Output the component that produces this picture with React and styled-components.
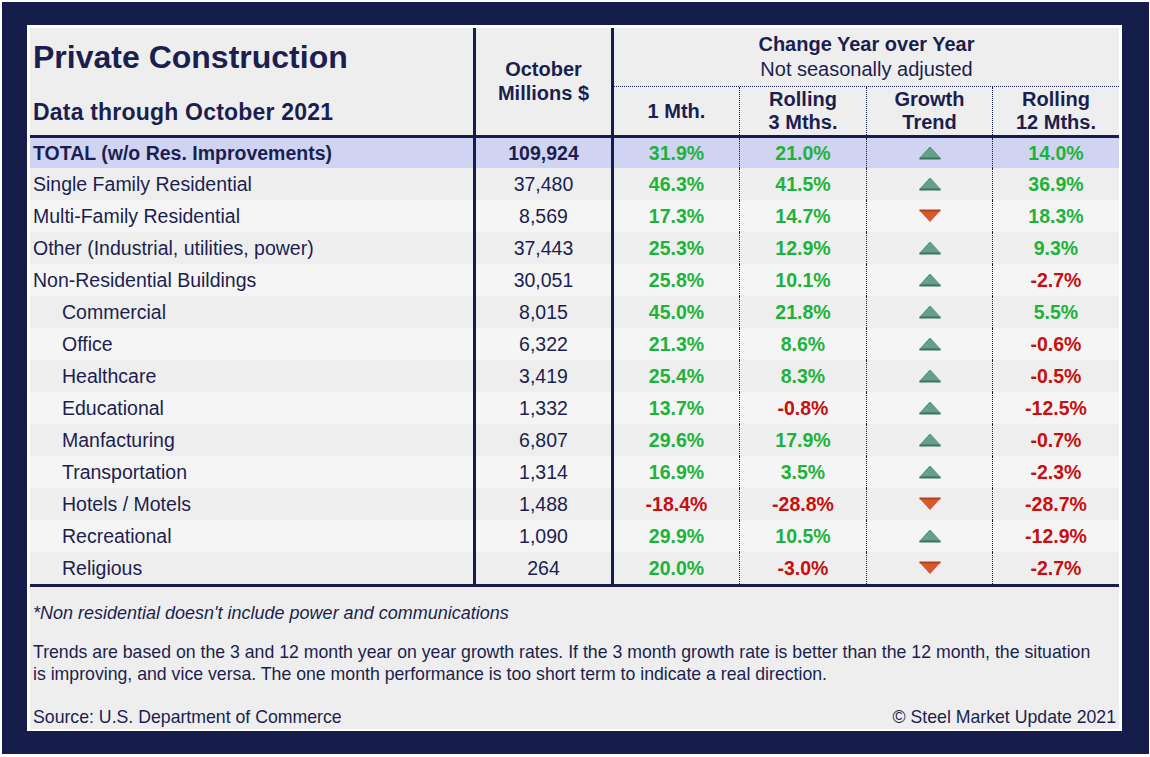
import React from 'react';
import styled, { createGlobalStyle } from 'styled-components';

const NAVY = '#171d4b';
const INK = '#1b1f4f';
const GREEN = '#1db33b';
const RED = '#c80f0f';

const GlobalStyle = createGlobalStyle`
  html, body {
    margin: 0;
    padding: 0;
    background: #ffffff;
  }
  body {
    font-family: 'Liberation Sans', Arial, sans-serif;
    color: ${INK};
  }
`;

const Page = styled.div`
  padding: 2px 1px 4px 2px;
`;

const Frame = styled.div`
  background: ${NAVY};
  padding: 23px 27px 23px 25px;
`;

const Panel = styled.div`
  background: #eeeeee;
  border: 3px solid #ffffff;
  border-bottom-width: 2px;
`;

const Header = styled.div`
  display: flex;
  height: 107px;
  border-bottom: 3px solid ${NAVY};
`;

const TitleCell = styled.div`
  width: 446px;
  box-sizing: border-box;
  border-right: 3px solid ${NAVY};
  display: flex;
  flex-direction: column;
  justify-content: space-between;
  padding: 11px 0 10px 3px;
`;

const Title = styled.h1`
  margin: 0;
  font-size: 32px;
  line-height: 36px;
  font-weight: 700;
  color: ${INK};
`;

const Subtitle = styled.h2`
  margin: 0;
  font-size: 23px;
  line-height: 26px;
  font-weight: 700;
  color: ${INK};
  letter-spacing: 0.2px;
`;

const NumHead = styled.div`
  width: 138px;
  box-sizing: border-box;
  border-right: 3px solid ${NAVY};
  display: flex;
  flex-direction: column;
  justify-content: center;
  align-items: center;
  font-weight: 700;
  font-size: 20px;
  line-height: 24px;
  padding-bottom: 2px;
`;

const ChangeHead = styled.div`
  flex: 1;
  display: flex;
  flex-direction: column;
`;

const ChangeTop = styled.div`
  height: 59px;
  box-sizing: border-box;
  border-bottom: 1px dotted ${NAVY};
  padding-top: 4px;
  text-align: center;
  font-size: 20px;
  line-height: 25px;
`;

const Strong = styled.div`
  font-weight: 700;
`;

const SubHeads = styled.div`
  flex: 1;
  display: grid;
  grid-template-columns: 126px 127px 126px 126px;
`;

const SubHead = styled.div`
  display: flex;
  align-items: center;
  justify-content: center;
  text-align: center;
  font-weight: 700;
  font-size: 20px;
  line-height: 23px;
  border-right: ${(p) => (p.$last ? 'none' : `1px dotted ${NAVY}`)};
`;

const Row = styled.div`
  display: grid;
  grid-template-columns: 446px 138px 126px 127px 126px 126px;
  height: ${(p) => (p.$total ? 30 : 32)}px;
  background: ${(p) => (p.$total ? '#d0d4f2' : p.$alt ? '#f5f5f5' : '#eeeeee')};
  font-size: 19.5px;
  font-weight: ${(p) => (p.$total ? 700 : 400)};
  &:last-of-type {
    border-bottom: 3px solid ${NAVY};
  }
`;

const Label = styled.div`
  display: flex;
  align-items: center;
  padding-left: ${(p) => (p.$indent ? 32 : 3)}px;
  border-right: 3px solid ${NAVY};
`;

const Num = styled.div`
  display: flex;
  align-items: center;
  justify-content: center;
  border-right: 3px solid ${NAVY};
`;

const Pct = styled.div`
  display: flex;
  align-items: center;
  justify-content: center;
  font-weight: 700;
  color: ${(p) => (p.$neg ? RED : GREEN)};
  border-right: ${(p) => (p.$last ? 'none' : `1px dotted ${NAVY}`)};
`;

const TrendCell = styled.div`
  display: flex;
  align-items: center;
  justify-content: center;
  border-right: 1px dotted ${NAVY};
`;

const Footer = styled.div`
  padding: 15px 3px 0 3px;
  height: 142px;
  box-sizing: border-box;
  display: flex;
  flex-direction: column;
  font-size: 17.7px;
  line-height: 22px;
`;

const Note = styled.p`
  margin: 0;
  font-style: italic;
  font-size: 18px;
`;

const Para = styled.p`
  margin: 17px 0 0 0;
  max-width: 1068px;
`;

const SourceLine = styled.div`
  margin-top: 21px;
  display: flex;
  justify-content: space-between;
`;

const Trend = ({ up }) =>
  up ? (
    <svg width="22" height="14" viewBox="0 0 22 14">
      <polygon points="11,1 21.5,12.5 0.5,12.5" fill="#62a28a" />
      <line x1="0.5" y1="12.5" x2="21.5" y2="12.5" stroke="#3a725d" strokeWidth="2" />
      <polyline points="0.5,12.5 11,1 21.5,12.5" fill="none" stroke="#4f8f77" strokeWidth="1" />
    </svg>
  ) : (
    <svg width="22" height="14" viewBox="0 0 22 14">
      <polygon points="0.5,1.5 21.5,1.5 11,13" fill="#d9562e" />
      <line x1="0.5" y1="1.5" x2="21.5" y2="1.5" stroke="#b3401f" strokeWidth="2" />
    </svg>
  );

const rows = [
  ['Single Family Residential', '37,480', '46.3%', '41.5%', true, '36.9%'],
  ['Multi-Family Residential', '8,569', '17.3%', '14.7%', false, '18.3%'],
  ['Other (Industrial, utilities, power)', '37,443', '25.3%', '12.9%', true, '9.3%'],
  ['Non-Residential Buildings', '30,051', '25.8%', '10.1%', true, '-2.7%'],
  ['Commercial', '8,015', '45.0%', '21.8%', true, '5.5%', true],
  ['Office', '6,322', '21.3%', '8.6%', true, '-0.6%', true],
  ['Healthcare', '3,419', '25.4%', '8.3%', true, '-0.5%', true],
  ['Educational', '1,332', '13.7%', '-0.8%', true, '-12.5%', true],
  ['Manfacturing', '6,807', '29.6%', '17.9%', true, '-0.7%', true],
  ['Transportation', '1,314', '16.9%', '3.5%', true, '-2.3%', true],
  ['Hotels / Motels', '1,488', '-18.4%', '-28.8%', false, '-28.7%', true],
  ['Recreational', '1,090', '29.9%', '10.5%', true, '-12.9%', true],
  ['Religious', '264', '20.0%', '-3.0%', false, '-2.7%', true],
];

const neg = (v) => v.startsWith('-');

export default function App() {
  return (
    <Page>
      <GlobalStyle />
      <Frame>
        <Panel>
          <Header>
            <TitleCell>
              <Title>Private Construction</Title>
              <Subtitle>Data through October 2021</Subtitle>
            </TitleCell>
            <NumHead>
              <div>October</div>
              <div>Millions $</div>
            </NumHead>
            <ChangeHead>
              <ChangeTop>
                <Strong>Change Year over Year</Strong>
                <div>Not seasonally adjusted</div>
              </ChangeTop>
              <SubHeads>
                <SubHead>1 Mth.</SubHead>
                <SubHead>
                  Rolling
                  <br />3 Mths.
                </SubHead>
                <SubHead>
                  Growth
                  <br />
                  Trend
                </SubHead>
                <SubHead $last>
                  Rolling
                  <br />
                  12 Mths.
                </SubHead>
              </SubHeads>
            </ChangeHead>
          </Header>

          <div>
            <Row $total>
              <Label>TOTAL (w/o Res. Improvements)</Label>
              <Num>109,924</Num>
              <Pct>31.9%</Pct>
              <Pct>21.0%</Pct>
              <TrendCell>
                <Trend up />
              </TrendCell>
              <Pct $last>14.0%</Pct>
            </Row>
            {rows.map(([label, num, m1, r3, up, r12, indent], i) => (
              <Row key={label} $alt={i % 2 === 1}>
                <Label $indent={indent}>{label}</Label>
                <Num>{num}</Num>
                <Pct $neg={neg(m1)}>{m1}</Pct>
                <Pct $neg={neg(r3)}>{r3}</Pct>
                <TrendCell>
                  <Trend up={up} />
                </TrendCell>
                <Pct $neg={neg(r12)} $last>
                  {r12}
                </Pct>
              </Row>
            ))}
          </div>

          <Footer>
            <Note>*Non residential doesn't include power and communications</Note>
            <Para>
              Trends are based on the 3 and 12 month year on year growth rates. If the 3 month
              growth rate is better than the 12 month, the situation is improving, and vice
              versa. The one month performance is too short term to indicate a real direction.
            </Para>
            <SourceLine>
              <span>Source: U.S. Department of Commerce</span>
              <span>© Steel Market Update 2021</span>
            </SourceLine>
          </Footer>
        </Panel>
      </Frame>
    </Page>
  );
}
